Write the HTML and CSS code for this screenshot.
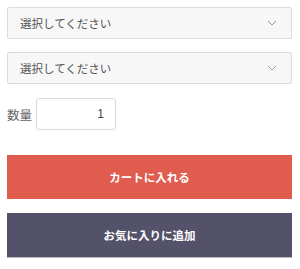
FILE: index.html
```html
<!DOCTYPE html>
<html lang="ja">
<head>
    <meta charset="UTF-8">
    <meta name="viewport" content="width=device-width, initial-scale=1.0">
    <title>商品オプション</title>
    <link rel="stylesheet" href="styles.css">
</head>
<body>
    <div class="cart-form">
        <div class="select-box">
            <span>選択してください</span>
            <svg class="chevron" width="10" height="6" viewBox="0 0 10 6"><path d="M1 1l4 4 4-4" fill="none" stroke="#999" stroke-width="1"/></svg>
        </div>
        <div class="select-box">
            <span>選択してください</span>
            <svg class="chevron" width="10" height="6" viewBox="0 0 10 6"><path d="M1 1l4 4 4-4" fill="none" stroke="#999" stroke-width="1"/></svg>
        </div>

        <div class="qty-row">
            <label class="qty-label">数量</label>
            <div class="qty-input">1</div>
        </div>

        <button class="btn btn-cart">カートに入れる</button>
        <button class="btn btn-fav">お気に入りに追加</button>
    </div>
</body>
</html>
```

FILE: styles.css
```css
* {
    margin: 0;
    padding: 0;
    box-sizing: border-box;
}

body {
    font-family: "Noto Sans CJK JP", "Noto Sans", sans-serif;
    background: #fff;
    color: #555;
}

.cart-form {
    display: flex;
    flex-direction: column;
    padding: 7px 8px 0 7px;
}

/* セレクト */
.select-box {
    height: 32px;
    border: 1px solid #dcdcdc;
    border-radius: 2px;
    background: #f7f7f7;
    display: flex;
    align-items: center;
    justify-content: space-between;
    padding: 0 14px 0 12px;
    font-size: 11.5px;
    color: #555;
    margin-bottom: 13px;
}

.chevron {
    display: block;
}

/* 数量 */
.qty-row {
    display: flex;
    align-items: center;
    gap: 4px;
    margin-top: 1px;
    margin-bottom: 25px;
}

.qty-label {
    font-size: 12.5px;
    color: #666;
}

.qty-input {
    width: 80px;
    height: 32px;
    border: 1px solid #d8d8d8;
    border-radius: 3px;
    background: #fff;
    display: flex;
    align-items: center;
    justify-content: flex-end;
    padding-right: 11px;
    font-family: "Liberation Sans", Arial, sans-serif;
    font-size: 12px;
    color: #444;
}

/* ボタン */
.btn {
    height: 44px;
    border: none;
    color: #fff;
    font-family: "Noto Sans CJK JP", sans-serif;
    font-size: 11.5px;
    font-weight: bold;
    cursor: pointer;
}

.btn-cart {
    background: #df5c4f;
    margin-bottom: 14px;
}

.btn-fav {
    background: #54516a;
    height: 45px;
    border-bottom: 1px solid #b8b8c0;
}
```
